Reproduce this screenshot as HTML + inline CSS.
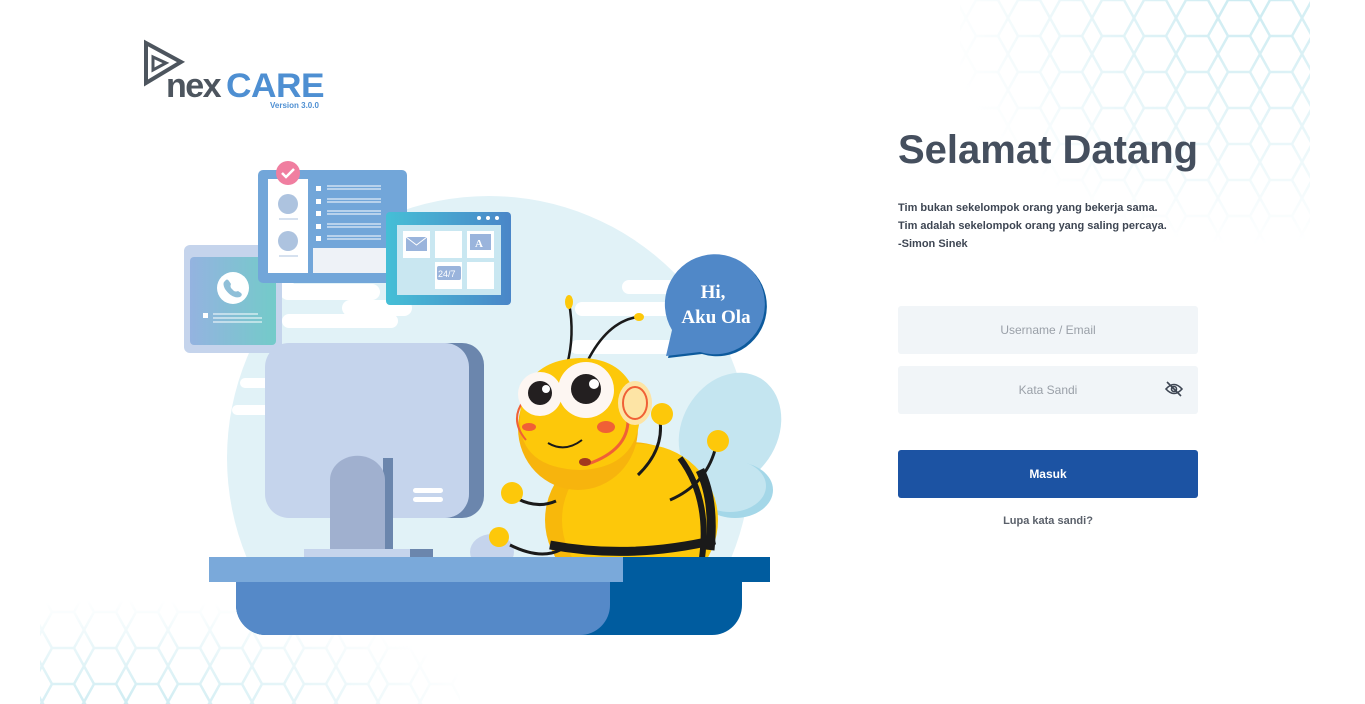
<!DOCTYPE html>
<html><head><meta charset="utf-8"><style>
html,body{margin:0;padding:0;background:#fff;width:1365px;height:704px;overflow:hidden;font-family:"Liberation Sans",sans-serif}
.abs{position:absolute}
h1{position:absolute;left:898px;top:128px;margin:0;font-size:40px;font-weight:bold;color:#454f5e;letter-spacing:0px}
.q{position:absolute;left:898px;top:199px;font-size:11px;line-height:18px;color:#3e4653;font-weight:bold}
.inp{position:absolute;left:898px;width:300px;height:48px;background:#f1f5f8;border-radius:3px;color:#9aa0a8;font-size:12px;text-align:center;line-height:48px}
.btn{position:absolute;left:898px;top:450px;width:300px;height:48px;background:#1c53a3;border-radius:3px;color:#fff;font-size:12px;text-align:center;line-height:48px;font-weight:bold}
.lupa{position:absolute;left:898px;width:300px;top:515px;text-align:center;font-size:11px;color:#5b616b;font-weight:bold}
</style></head><body>
<svg class="abs" style="left:0;top:0" width="1365" height="704">
<defs>
<pattern id="hex" width="42" height="36" patternUnits="userSpaceOnUse">
<path d="M10 0 L32 0 L42 18 L32 36 L10 36 L0 18Z M0 18 L-10 18 M42 18 L52 18" fill="none" stroke="#c6e9f0" stroke-width="2.5"/>
</pattern>
<radialGradient id="f1" cx="0.8" cy="0" r="0.85"><stop offset="0" stop-color="#fff" stop-opacity="0.9"/><stop offset="1" stop-color="#fff" stop-opacity="0"/></radialGradient>
<radialGradient id="f2" cx="0.2" cy="1" r="0.85"><stop offset="0" stop-color="#fff" stop-opacity="0.9"/><stop offset="1" stop-color="#fff" stop-opacity="0"/></radialGradient>
<mask id="m1"><rect x="960" y="0" width="360" height="290" fill="url(#f1)"/></mask>
<mask id="m2"><rect x="40" y="580" width="420" height="130" fill="url(#f2)"/></mask>
<clipPath id="cc"><rect x="0" y="0" width="1365" height="582"/></clipPath>
<linearGradient id="gp" x1="0" x2="1"><stop offset="0" stop-color="#94b3e0"/><stop offset="1" stop-color="#73cbc9"/></linearGradient>
<linearGradient id="gg" x1="0" x2="1"><stop offset="0" stop-color="#45bfd6"/><stop offset="1" stop-color="#4a86c8"/></linearGradient>
</defs>
<rect x="960" y="0" width="350" height="290" fill="url(#hex)" mask="url(#m1)"/>
<rect x="40" y="580" width="420" height="124" fill="url(#hex)" mask="url(#m2)"/>
<!-- logo -->
<path d="M146 43 L181 62 L146 83Z" fill="none" stroke="#4d555e" stroke-width="4"/>
<path d="M153 57 L166 63 L153 70Z" fill="none" stroke="#4d555e" stroke-width="3"/>
<text x="166" y="97" font-size="34" font-weight="bold" fill="#4d555e" letter-spacing="-1.5">nex</text>
<text x="226" y="97" font-size="34" font-weight="bold" fill="#4e8fd2" letter-spacing="-0.5" textLength="98" lengthAdjust="spacingAndGlyphs">CARE</text>
<text x="270" y="108" font-size="8" font-weight="bold" fill="#4e8fd2">Version 3.0.0</text>
<!-- big circle -->
<circle cx="489" cy="458" r="262" fill="#e1f2f7" clip-path="url(#cc)"/>
<!-- white streaks -->
<g fill="#fff">
<rect x="622" y="280" width="80" height="14" rx="7"/><rect x="575" y="302" width="140" height="14" rx="7"/>
<rect x="570" y="340" width="120" height="14" rx="7"/>
<rect x="280" y="284" width="100" height="16" rx="8"/><rect x="342" y="300" width="70" height="16" rx="8"/><rect x="282" y="314" width="116" height="14" rx="7"/>
<rect x="240" y="378" width="40" height="10" rx="5"/><rect x="232" y="405" width="40" height="10" rx="5"/>
</g>
<!-- phone card -->
<rect x="184" y="245" width="98" height="108" rx="6" fill="#c5d4ec"/>
<rect x="190" y="257" width="86" height="88" rx="4" fill="url(#gp)"/>
<circle cx="233" cy="288" r="16" fill="#fff"/>
<path d="M225 281 q2 -3 4 0 l2 3 q-1 2 0 4 l3 3 q2 1 4 0 l3 2 q2 2 -1 4 q-8 2 -15 -8 q-3 -6 0 -8z" fill="#8fbfd8"/>
<rect x="203" y="313" width="5" height="5" fill="#fff"/>
<g stroke="#fff" stroke-width="1"><line x1="213" y1="314" x2="258" y2="314"/><line x1="213" y1="318" x2="262" y2="318"/><line x1="213" y1="322" x2="262" y2="322"/></g>
<!-- doc card -->
<rect x="258" y="170" width="149" height="113" rx="5" fill="#72a6d9"/>
<rect x="268" y="179" width="40" height="94" fill="#fff"/>
<circle cx="288" cy="204" r="10" fill="#adc3df"/><circle cx="288" cy="241" r="10" fill="#adc3df"/>
<line x1="279" y1="219" x2="298" y2="219" stroke="#adc3df"/><line x1="279" y1="256" x2="298" y2="256" stroke="#adc3df"/>
<circle cx="288" cy="173" r="12" fill="#f07ea0"/>
<path d="M282 173 l4 4 l8 -8" fill="none" stroke="#fff" stroke-width="2.5"/>
<g fill="#fff"><rect x="316" y="186" width="5" height="5"/><rect x="316" y="199" width="5" height="5"/><rect x="316" y="211" width="5" height="5"/><rect x="316" y="224" width="5" height="5"/><rect x="316" y="236" width="5" height="5"/></g>
<g stroke="#fff" stroke-width="1"><line x1="327" y1="186" x2="381" y2="186"/><line x1="327" y1="189" x2="381" y2="189"/><line x1="327" y1="199" x2="381" y2="199"/><line x1="327" y1="202" x2="381" y2="202"/><line x1="327" y1="211" x2="381" y2="211"/><line x1="327" y1="214" x2="381" y2="214"/><line x1="327" y1="224" x2="381" y2="224"/><line x1="327" y1="227" x2="381" y2="227"/><line x1="327" y1="236" x2="381" y2="236"/><line x1="327" y1="239" x2="381" y2="239"/></g>
<rect x="313" y="248" width="80" height="25" fill="#eef2f7"/>
<!-- grid card -->
<rect x="386" y="212" width="125" height="93" rx="4" fill="url(#gg)"/>
<circle cx="479" cy="218" r="2" fill="#fff"/><circle cx="488" cy="218" r="2" fill="#fff"/><circle cx="497" cy="218" r="2" fill="#fff"/>
<rect x="397" y="225" width="104" height="70" fill="#c9e7f1"/>
<g fill="#fff"><rect x="403" y="231" width="27" height="27"/><rect x="435" y="231" width="27" height="27"/><rect x="467" y="231" width="27" height="27"/><rect x="435" y="262" width="27" height="27"/><rect x="467" y="262" width="27" height="27"/></g>
<rect x="406" y="237" width="21" height="14" fill="#9ab4dc"/><path d="M406 237 l10.5 8 l10.5 -8" fill="none" stroke="#fff"/>
<rect x="470" y="234" width="21" height="16" fill="#9ab4dc"/><text x="475" y="247" font-size="11" font-weight="bold" fill="#fff" font-family="Liberation Serif">A</text>
<rect x="437" y="266" width="24" height="14" rx="2" fill="#9ab4dc"/><text x="438" y="277" font-size="9" fill="#fff">24/7</text>
<!-- monitor -->
<rect x="282" y="343" width="202" height="175" rx="22" fill="#6b86ad"/>
<rect x="265" y="343" width="204" height="175" rx="24" fill="#c5d4ec"/>
<rect x="383" y="458" width="10" height="92" fill="#6b86ad"/>
<path d="M330 480 a25 22 0 0 1 55 0 L385 551 L330 551Z" fill="#a0b0cf"/>
<rect x="304" y="549" width="129" height="8" fill="#c5d4ec"/><rect x="410" y="549" width="23" height="8" fill="#6b86ad"/>
<rect x="413" y="488" width="30" height="5" rx="2.5" fill="#fff"/><rect x="413" y="497" width="30" height="5" rx="2.5" fill="#fff"/>
<!-- bee wings -->
<ellipse cx="730" cy="430" rx="48" ry="60" transform="rotate(30 730 430)" fill="#c4e5f0"/>
<ellipse cx="735" cy="490" rx="38" ry="28" fill="#a4d7e8"/>
<ellipse cx="730" cy="486" rx="36" ry="26" fill="#c4e5f0"/>
<!-- mouse -->
<ellipse cx="492" cy="552" rx="22" ry="18" fill="#c5d4ec"/>
<circle cx="499" cy="537" r="10" fill="#fdc80a"/>
<!-- body -->
<ellipse cx="630" cy="520" rx="85" ry="78" fill="#f8b80b"/>
<ellipse cx="640" cy="520" rx="78" ry="76" fill="#fdc80a"/>
<path d="M700 470 q15 30 10 80" stroke="#1a1a1a" stroke-width="9" fill="none"/>
<path d="M680 458 q30 40 22 100" stroke="#1a1a1a" stroke-width="6" fill="none"/>
<path d="M550 545 q80 15 165 -5" stroke="#1a1a1a" stroke-width="9" fill="none"/>
<!-- arms -->
<path d="M518 499 q20 10 38 2" stroke="#1a1a1a" stroke-width="3" fill="none"/>
<circle cx="512" cy="493" r="11" fill="#fdc80a"/>
<path d="M510 545 q30 15 50 5" stroke="#1a1a1a" stroke-width="3" fill="none"/>
<path d="M660 420 q4 30 -22 55" stroke="#1a1a1a" stroke-width="3" fill="none"/>
<circle cx="662" cy="414" r="11" fill="#fdc80a"/>
<path d="M715 450 q-10 35 -45 50" stroke="#1a1a1a" stroke-width="3" fill="none"/>
<circle cx="718" cy="441" r="11" fill="#fdc80a"/>
<!-- antennae -->
<path d="M567 365 q8 -30 2 -62" stroke="#1a1a1a" stroke-width="2.5" fill="none"/><ellipse cx="569" cy="302" rx="4" ry="7" fill="#fdc80a"/>
<path d="M587 362 q20 -40 50 -45" stroke="#1a1a1a" stroke-width="2.5" fill="none"/><ellipse cx="639" cy="317" rx="5" ry="4" fill="#fdc80a"/>
<!-- head -->
<ellipse cx="578" cy="428" rx="60" ry="62" fill="#f7b40d"/>
<path d="M520 420 q0 -60 60 -62 q55 0 60 60 q-5 50 -60 52 q-60 -2 -60 -50z" fill="#fdc80a"/>
<path d="M524 400 q-15 20 2 40" stroke="#f06036" stroke-width="2" fill="none"/>
<circle cx="540" cy="394" r="22" fill="#fdf6f2"/><circle cx="586" cy="390" r="28" fill="#fdf6f2"/>
<circle cx="540" cy="393" r="12" fill="#231f20"/><circle cx="546" cy="389" r="4" fill="#fff"/>
<circle cx="586" cy="389" r="15" fill="#231f20"/><circle cx="594" cy="384" r="5" fill="#fff"/>
<ellipse cx="529" cy="427" rx="7" ry="4" fill="#f06036"/><ellipse cx="606" cy="427" rx="9" ry="6" fill="#f06036"/>
<path d="M548 443 q17 10 34 -3" stroke="#1a1a1a" stroke-width="2" fill="none"/>
<path d="M628 420 q0 30 -40 44" stroke="#f06036" stroke-width="3" fill="none"/>
<ellipse cx="585" cy="462" rx="6" ry="4" fill="#a33a1e"/>
<ellipse cx="635" cy="403" rx="17" ry="22" fill="#fde4a5"/>
<ellipse cx="635" cy="403" rx="12" ry="16" fill="none" stroke="#f06036" stroke-width="2"/>
<!-- speech bubble -->
<path d="M666 356 L672 330 A50 50 0 1 1 700 352 Z" fill="#0d5a9c" transform="translate(2,2)"/>
<path d="M666 356 L672 330 A50 50 0 1 1 700 352 Z" fill="#5088c8"/>
<text x="713" y="298" text-anchor="middle" font-family="Liberation Serif" font-weight="bold" font-size="19" fill="#fff">Hi,</text>
<text x="716" y="323" text-anchor="middle" font-family="Liberation Serif" font-weight="bold" font-size="19" fill="#fff">Aku Ola</text>
<!-- desk -->
<rect x="209" y="557" width="414" height="25" fill="#7aa9da"/>
<rect x="623" y="557" width="147" height="25" fill="#005c9f"/>
<path d="M236 582 H742 V605 a30 30 0 0 1 -30 30 H266 a30 30 0 0 1 -30 -30Z" fill="#005c9f"/>
<path d="M236 582 H610 V605 a30 30 0 0 1 -30 30 H266 a30 30 0 0 1 -30 -30Z" fill="#5589c8"/>
</svg>
<h1>Selamat Datang</h1>
<div class="q">Tim bukan sekelompok orang yang bekerja sama.<br>Tim adalah sekelompok orang yang saling percaya.<br>-Simon Sinek</div>
<div class="inp" style="top:306px">Username / Email</div>
<div class="inp" style="top:366px">Kata Sandi</div>
<svg class="abs" style="left:1162px;top:379px" width="24" height="20"><g transform="translate(12,10)" fill="none" stroke="#3e4653" stroke-width="1.6"><path d="M-8 0 q8 -9 16 0 q-8 9 -16 0z"/><circle cx="0" cy="0" r="2.5"/><line x1="-7" y1="-7" x2="7" y2="7"/></g></svg>
<div class="btn">Masuk</div>
<div class="lupa">Lupa kata sandi?</div>
</body></html>
